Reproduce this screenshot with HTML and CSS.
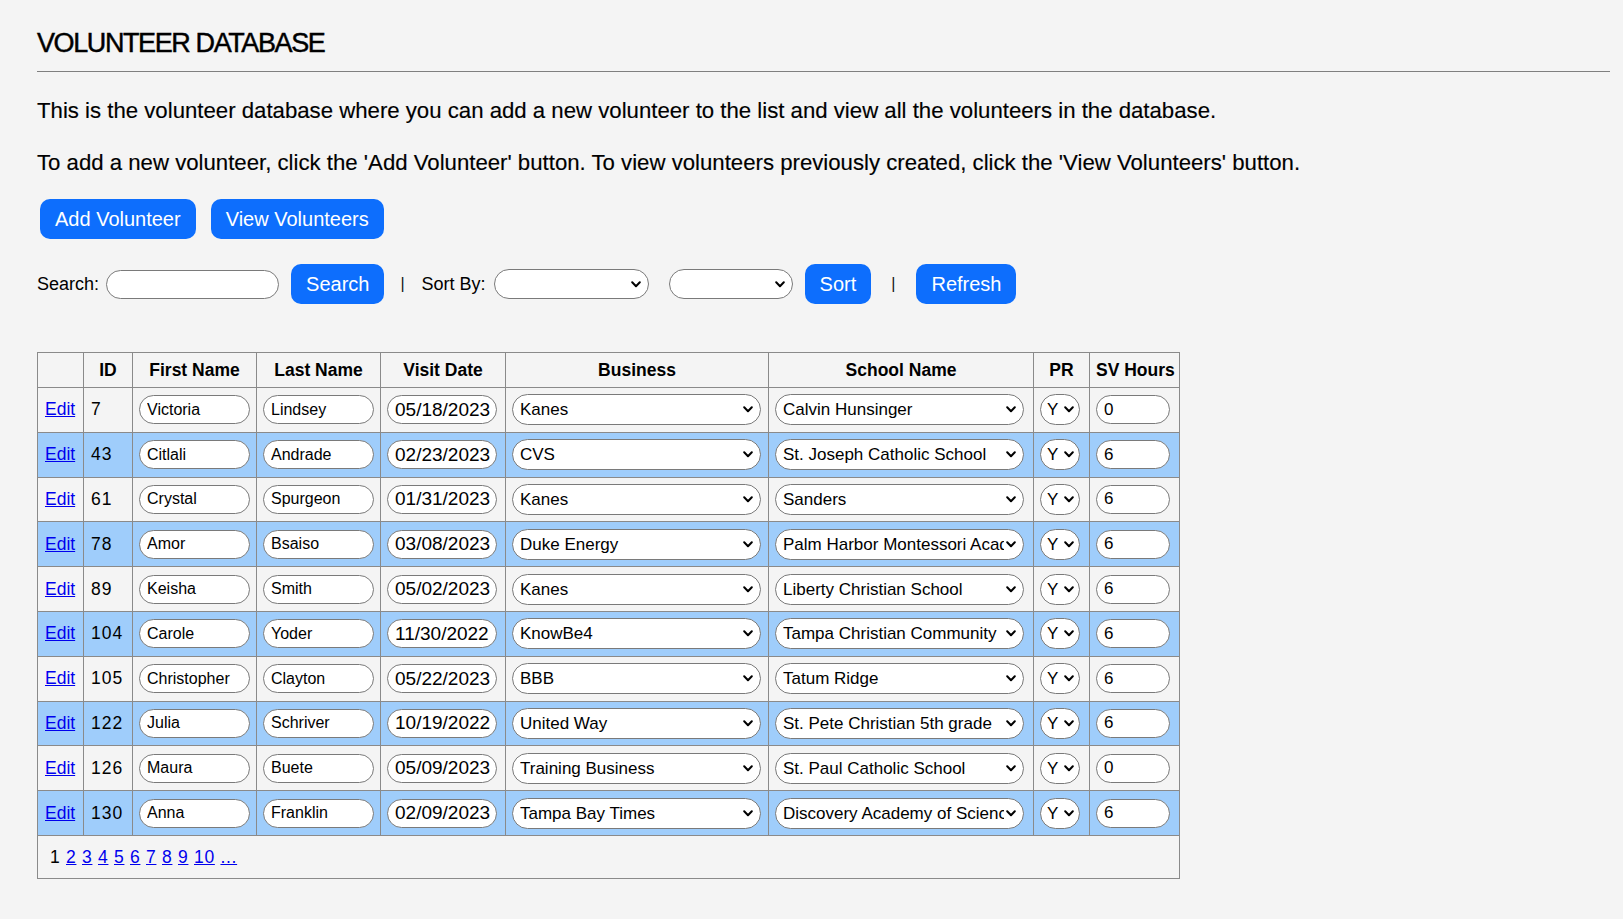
FILE: index.html
```html
<!DOCTYPE html>
<html lang="en">
<head>
<meta charset="utf-8">
<title>Volunteer Database</title>
<link rel="stylesheet" href="styles.css">
</head>
<body>
<div class="page">
  <h1 class="title">VOLUNTEER DATABASE</h1>
  <p class="intro first">This is the volunteer database where you can add a new volunteer to the list and view all the volunteers in the database.</p>
  <p class="intro second">To add a new volunteer, click the 'Add Volunteer' button. To view volunteers previously created, click the 'View Volunteers' button.</p>

  <div class="actions">
    <button class="btn" type="button">Add Volunteer</button>
    <button class="btn" type="button">View Volunteers</button>
  </div>

  <div class="toolbar">
    <label class="tb-label" for="q">Search:</label>
    <input class="field search-input" id="q" type="text">
    <button class="btn search-btn" type="button">Search</button>
    <span class="pipe pipe-one">|</span>
    <span class="tb-label sort-label">Sort By:</span>
    <select class="pick sort-one"><option></option></select>
    <select class="pick sort-two"><option></option></select>
    <button class="btn sort-btn" type="button">Sort</button>
    <span class="pipe pipe-two">|</span>
    <button class="btn refresh-btn" type="button">Refresh</button>
  </div>

  <table class="grid">
    <colgroup>
      <col class="c-edit"><col class="c-id"><col class="c-first"><col class="c-last"><col class="c-date"><col class="c-biz"><col class="c-school"><col class="c-pr"><col class="c-sv">
    </colgroup>
    <thead>
      <tr><th></th><th>ID</th><th>First Name</th><th>Last Name</th><th>Visit Date</th><th>Business</th><th>School Name</th><th>PR</th><th>SV Hours</th></tr>
    </thead>
    <tbody>
      <tr>
        <td class="t"><a href="#">Edit</a></td><td class="t num">7</td>
        <td><input class="field name" type="text" value="Victoria"></td>
        <td><input class="field name" type="text" value="Lindsey"></td>
        <td><input class="field date" type="text" value="05/18/2023"></td>
        <td><select class="pick biz"><option>Kanes</option></select></td>
        <td><select class="pick school"><option>Calvin Hunsinger</option></select></td>
        <td><select class="pick pr"><option>Y</option></select></td>
        <td><input class="field sv" type="text" value="0"></td>
      </tr>
      <tr>
        <td class="t"><a href="#">Edit</a></td><td class="t num">43</td>
        <td><input class="field name" type="text" value="Citlali"></td>
        <td><input class="field name" type="text" value="Andrade"></td>
        <td><input class="field date" type="text" value="02/23/2023"></td>
        <td><select class="pick biz"><option>CVS</option></select></td>
        <td><select class="pick school"><option>St. Joseph Catholic School</option></select></td>
        <td><select class="pick pr"><option>Y</option></select></td>
        <td><input class="field sv" type="text" value="6"></td>
      </tr>
      <tr>
        <td class="t"><a href="#">Edit</a></td><td class="t num">61</td>
        <td><input class="field name" type="text" value="Crystal"></td>
        <td><input class="field name" type="text" value="Spurgeon"></td>
        <td><input class="field date" type="text" value="01/31/2023"></td>
        <td><select class="pick biz"><option>Kanes</option></select></td>
        <td><select class="pick school"><option>Sanders</option></select></td>
        <td><select class="pick pr"><option>Y</option></select></td>
        <td><input class="field sv" type="text" value="6"></td>
      </tr>
      <tr>
        <td class="t"><a href="#">Edit</a></td><td class="t num">78</td>
        <td><input class="field name" type="text" value="Amor"></td>
        <td><input class="field name" type="text" value="Bsaiso"></td>
        <td><input class="field date" type="text" value="03/08/2023"></td>
        <td><select class="pick biz"><option>Duke Energy</option></select></td>
        <td><select class="pick school"><option>Palm Harbor Montessori Academy</option></select></td>
        <td><select class="pick pr"><option>Y</option></select></td>
        <td><input class="field sv" type="text" value="6"></td>
      </tr>
      <tr>
        <td class="t"><a href="#">Edit</a></td><td class="t num">89</td>
        <td><input class="field name" type="text" value="Keisha"></td>
        <td><input class="field name" type="text" value="Smith"></td>
        <td><input class="field date" type="text" value="05/02/2023"></td>
        <td><select class="pick biz"><option>Kanes</option></select></td>
        <td><select class="pick school"><option>Liberty Christian School</option></select></td>
        <td><select class="pick pr"><option>Y</option></select></td>
        <td><input class="field sv" type="text" value="6"></td>
      </tr>
      <tr>
        <td class="t"><a href="#">Edit</a></td><td class="t num">104</td>
        <td><input class="field name" type="text" value="Carole"></td>
        <td><input class="field name" type="text" value="Yoder"></td>
        <td><input class="field date" type="text" value="11/30/2022"></td>
        <td><select class="pick biz"><option>KnowBe4</option></select></td>
        <td><select class="pick school"><option>Tampa Christian Community</option></select></td>
        <td><select class="pick pr"><option>Y</option></select></td>
        <td><input class="field sv" type="text" value="6"></td>
      </tr>
      <tr>
        <td class="t"><a href="#">Edit</a></td><td class="t num">105</td>
        <td><input class="field name" type="text" value="Christopher"></td>
        <td><input class="field name" type="text" value="Clayton"></td>
        <td><input class="field date" type="text" value="05/22/2023"></td>
        <td><select class="pick biz"><option>BBB</option></select></td>
        <td><select class="pick school"><option>Tatum Ridge</option></select></td>
        <td><select class="pick pr"><option>Y</option></select></td>
        <td><input class="field sv" type="text" value="6"></td>
      </tr>
      <tr>
        <td class="t"><a href="#">Edit</a></td><td class="t num">122</td>
        <td><input class="field name" type="text" value="Julia"></td>
        <td><input class="field name" type="text" value="Schriver"></td>
        <td><input class="field date" type="text" value="10/19/2022"></td>
        <td><select class="pick biz"><option>United Way</option></select></td>
        <td><select class="pick school"><option>St. Pete Christian 5th grade</option></select></td>
        <td><select class="pick pr"><option>Y</option></select></td>
        <td><input class="field sv" type="text" value="6"></td>
      </tr>
      <tr>
        <td class="t"><a href="#">Edit</a></td><td class="t num">126</td>
        <td><input class="field name" type="text" value="Maura"></td>
        <td><input class="field name" type="text" value="Buete"></td>
        <td><input class="field date" type="text" value="05/09/2023"></td>
        <td><select class="pick biz"><option>Training Business</option></select></td>
        <td><select class="pick school"><option>St. Paul Catholic School</option></select></td>
        <td><select class="pick pr"><option>Y</option></select></td>
        <td><input class="field sv" type="text" value="0"></td>
      </tr>
      <tr>
        <td class="t"><a href="#">Edit</a></td><td class="t num">130</td>
        <td><input class="field name" type="text" value="Anna"></td>
        <td><input class="field name" type="text" value="Franklin"></td>
        <td><input class="field date" type="text" value="02/09/2023"></td>
        <td><select class="pick biz"><option>Tampa Bay Times</option></select></td>
        <td><select class="pick school"><option>Discovery Academy of Science</option></select></td>
        <td><select class="pick pr"><option>Y</option></select></td>
        <td><input class="field sv" type="text" value="6"></td>
      </tr>
    </tbody>
    <tfoot>
      <tr>
        <td colspan="9" class="pager">
          <span>1</span> <a href="#">2</a> <a href="#">3</a> <a href="#">4</a> <a href="#">5</a> <a href="#">6</a> <a href="#">7</a> <a href="#">8</a> <a href="#">9</a> <a href="#">10</a> <a href="#">...</a>
        </td>
      </tr>
    </tfoot>
  </table>
</div>
</body>
</html>
```
FILE: styles.css
```css
* { box-sizing: border-box; }

html, body {
  margin: 0;
  background: #f4f4f4;
}

body {
  font-family: "Liberation Sans", Arial, sans-serif;
  color: #000;
}

.page {
  padding: 27px 13px 40px 37px;
}

.title {
  margin: 0;
  font-size: 27px;
  line-height: 32px;
  font-weight: normal;
  letter-spacing: -1.4px;
  -webkit-text-stroke: 0.45px #000;
  padding-bottom: 12px;
  border-bottom: 1px solid #7f7f7f;
}

.intro {
  margin: 0;
  font-size: 22.2px;
  line-height: 25px;
  -webkit-text-stroke: 0.15px #000;
}

.intro.first { margin-top: 26px; }
.intro.second { margin-top: 27px; }

.actions {
  display: flex;
  gap: 15px;
  margin-top: 24px;
  padding-left: 3px;
}

.btn {
  background: #0d6efd;
  color: #fff;
  border: none;
  border-radius: 10px;
  font-family: "Liberation Sans", Arial, sans-serif;
  font-size: 20px;
  line-height: 24px;
  padding: 8px 15px;
  cursor: pointer;
}

.toolbar {
  display: flex;
  align-items: center;
  height: 40px;
  margin-top: 25px;
}

.tb-label {
  font-size: 18px;
}

.field {
  height: 29px;
  border: 1px solid #7a7a7a;
  border-radius: 15px;
  background: #fff;
  font-family: "Liberation Sans", Arial, sans-serif;
  font-size: 16px;
  color: #000;
  padding: 0 7px;
  outline: none;
}

.search-input { width: 173px; margin-left: 7px; }
.search-btn { margin-left: 12px; }

.pipe {
  font-size: 16px;
  color: #111;
}

.pipe-one { margin-left: 16px; }
.sort-label { margin-left: 17px; }

.pick {
  -webkit-appearance: none;
  appearance: none;
  height: 31px;
  border: 1px solid #7a7a7a;
  border-radius: 16px;
  background-color: #fff;
  background-image: url("data:image/svg+xml;utf8,<svg xmlns='http://www.w3.org/2000/svg' width='10' height='7' viewBox='0 0 10 7'><path d='M1.2 1.3 L5 5.2 L8.8 1.3' fill='none' stroke='black' stroke-width='2' stroke-linecap='round' stroke-linejoin='round'/></svg>");
  background-repeat: no-repeat;
  background-position: right 7px center;
  background-size: 10px 7px;
  font-family: "Liberation Sans", Arial, sans-serif;
  font-size: 17px;
  color: #000;
  padding: 0 19px 0 7px;
  outline: none;
}

.sort-one { width: 155px; height: 30px; margin-left: 8px; }
.sort-two { width: 124px; height: 30px; margin-left: 20px; }
.sort-btn { margin-left: 12px; }
.pipe-two { margin-left: 20px; }
.refresh-btn { margin-left: 21px; }

.grid {
  border-collapse: collapse;
  table-layout: fixed;
  width: 1142px;
  margin-top: 48px;
}

.c-edit { width: 46px; }
.c-id { width: 49px; }
.c-first { width: 124px; }
.c-last { width: 124px; }
.c-date { width: 125px; }
.c-biz { width: 263px; }
.c-school { width: 265px; }
.c-pr { width: 56px; }
.c-sv { width: 90px; }

.grid th,
.grid td {
  border: 1px solid #8a8a8a;
  padding: 0 6px;
  vertical-align: middle;
  white-space: nowrap;
}

.grid th {
  height: 35px;
  font-size: 17.5px;
  font-weight: bold;
  text-align: center;
}

.grid tbody tr { height: 44.8px; }

.grid tbody tr:nth-child(even) td {
  background: #9fcdfb;
}

.grid td.t {
  padding: 0 7px;
  font-size: 17.5px;
}

.grid td.num {
  letter-spacing: 1px;
}

.grid a {
  color: #0000ee;
  text-decoration: underline;
}

.name { width: 111px; }

.date {
  width: 110px;
  font-size: 19px;
  letter-spacing: 0;
  padding: 0 2px 0 7px;
}

.biz { width: 249px; }
.school { width: 249px; }
.pr { width: 40px; padding: 0 18px 0 6px; background-position: right 5px center; }
.sv { width: 74px; font-size: 17px; }

.grid td.pager {
  height: 43px;
  padding: 2px 12px 0;
  font-size: 17.5px;
  letter-spacing: 0.7px;
}
```
